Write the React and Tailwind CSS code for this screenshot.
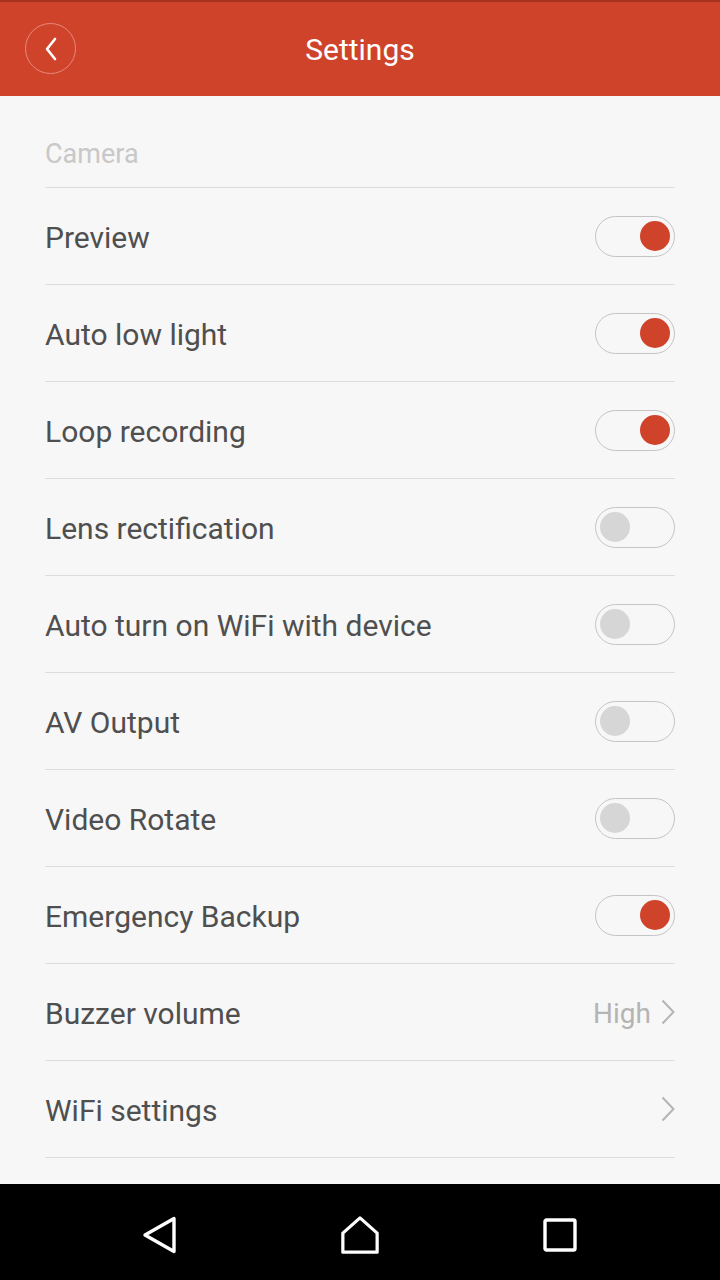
import React from "react";

const rows = [
  { label: "Preview", type: "toggle", on: true },
  { label: "Auto low light", type: "toggle", on: true },
  { label: "Loop recording", type: "toggle", on: true },
  { label: "Lens rectification", type: "toggle", on: false },
  { label: "Auto turn on WiFi with device", type: "toggle", on: false },
  { label: "AV Output", type: "toggle", on: false },
  { label: "Video Rotate", type: "toggle", on: false },
  { label: "Emergency Backup", type: "toggle", on: true },
  { label: "Buzzer volume", type: "link", value: "High" },
  { label: "WiFi settings", type: "link" },
];

function Toggle({ on }) {
  return (
    <div
      className={
        "flex h-[41px] w-[80px] items-center rounded-full border border-[#c4c4c4] px-[4px] " +
        (on ? "justify-end" : "justify-start")
      }
    >
      <div
        className={
          "h-[30px] w-[30px] rounded-full " +
          (on ? "bg-[#d0432b]" : "bg-[#d6d6d6]")
        }
      />
    </div>
  );
}

function Chevron() {
  return (
    <svg width="14" height="26" viewBox="0 0 14 26" fill="none">
      <path d="M1.5 1.5 L12.5 13 L1.5 24.5" stroke="#b4b4b4" strokeWidth="2" />
    </svg>
  );
}

export default function App() {
  return (
    <div
      className="flex h-[1280px] w-[720px] flex-col bg-[#f7f7f7]"
      style={{ fontFamily: "Roboto, 'Noto Sans', sans-serif" }}
    >
      <header className="relative flex h-[96px] shrink-0 items-center justify-center border-t-2 border-[#a8321f] bg-[#d0432b]">
        <button className="absolute left-[25px] top-[21px] flex h-[51px] w-[51px] items-center justify-center rounded-full border border-[#e58a7a]">
          <svg width="14" height="24" viewBox="0 0 14 24" fill="none">
            <path
              d="M11 2 L3 12 L11 22"
              stroke="white"
              strokeWidth="2.6"
              strokeLinecap="round"
              strokeLinejoin="round"
            />
          </svg>
        </button>
        <h1 className="text-[30px] text-white">Settings</h1>
      </header>

      <main className="flex-1 px-[45px]">
        <div className="flex h-[92px] items-end border-b border-[#dcdcdc] pb-[13px]">
          <span className="text-[27px] text-[#c8c8c8]">Camera</span>
        </div>
        {rows.map((r) => (
          <div
            key={r.label}
            className="flex h-[97px] items-center justify-between border-b border-[#dcdcdc]"
          >
            <span className="pt-[3px] text-[30px] text-[#4f4f4f]">{r.label}</span>
            {r.type === "toggle" ? (
              <Toggle on={r.on} />
            ) : (
              <div className="flex items-center gap-[10px]">
                {r.value && (
                  <span className="pt-[3px] text-[28px] text-[#b4b4b4]">{r.value}</span>
                )}
                <Chevron />
              </div>
            )}
          </div>
        ))}
      </main>

      <nav className="flex h-[96px] shrink-0 items-center justify-center gap-[160px] bg-black pt-[6px]">
        <div className="flex w-[40px] justify-center">
          <svg width="36" height="38" viewBox="0 0 36 38" fill="none">
            <path
              d="M32 2.5 L32 35.5 L3 19 Z"
              stroke="white"
              strokeWidth="3.4"
              strokeLinejoin="round"
            />
          </svg>
        </div>
        <div className="flex w-[40px] justify-center">
          <svg width="42" height="42" viewBox="0 0 42 42" fill="none">
            <path
              d="M21 3 L39 19 L39 39 L3 39 L3 19 Z"
              stroke="white"
              strokeWidth="3.4"
              strokeLinejoin="round"
            />
          </svg>
        </div>
        <div className="flex w-[40px] justify-center">
          <svg width="34" height="34" viewBox="0 0 34 34" fill="none">
            <rect x="2" y="2" width="30" height="30" rx="1.5" stroke="white" strokeWidth="3.4" />
          </svg>
        </div>
      </nav>
    </div>
  );
}
